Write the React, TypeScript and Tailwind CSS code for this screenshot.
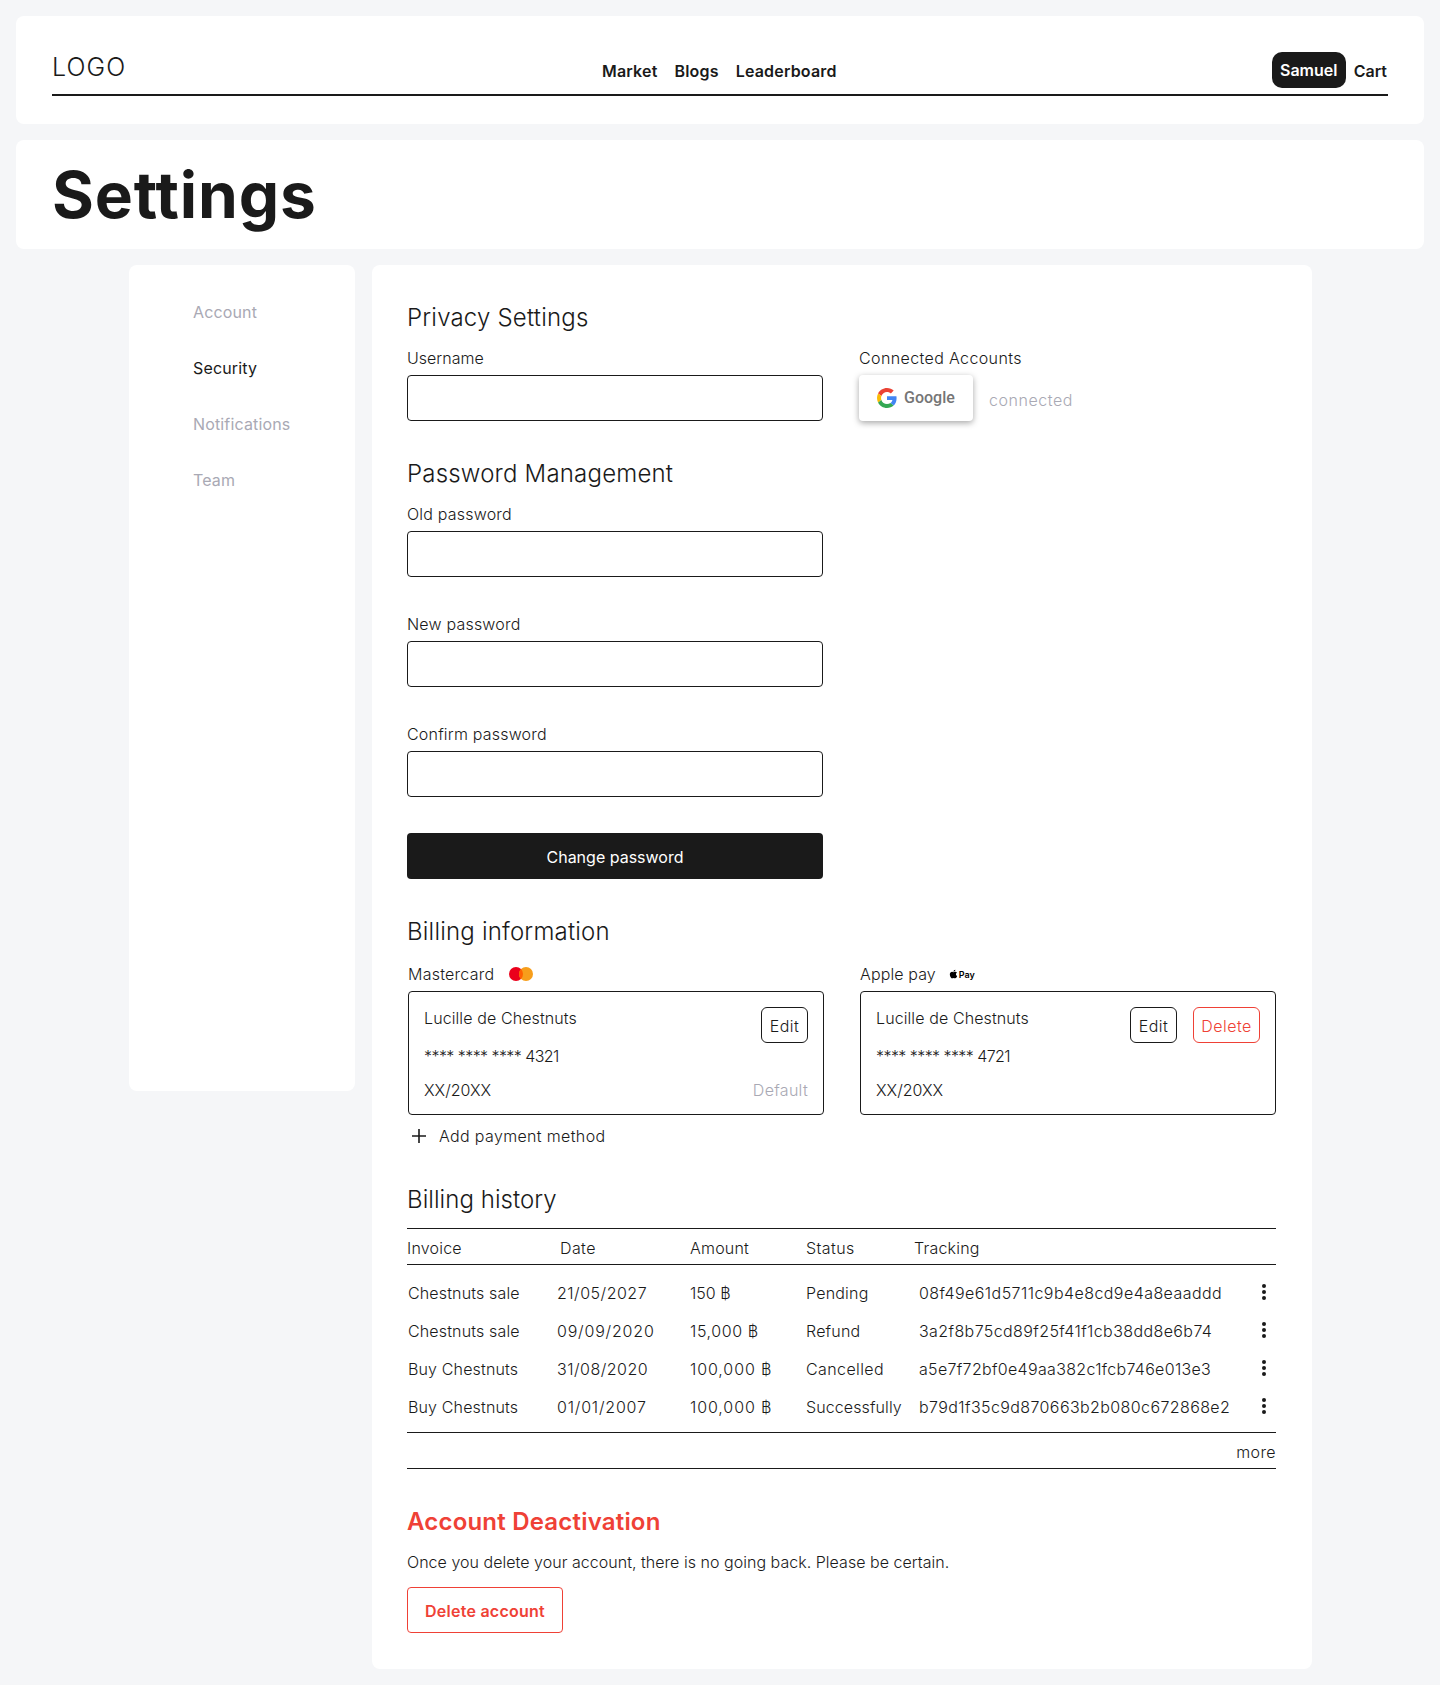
const Field = ({ label, top }: { label: string; top: string }) => (
  <div className={top}>
    <div className="h-6 leading-6 tracking-[0.2px]">{label}</div>
    <div className="mt-[5px] h-[46px] w-[416px] rounded border border-[#1a1a1a] bg-white" />
  </div>
);

const H = ({ children, top }: { children: string; top: string }) => (
  <h2 className={`${top} h-8 text-2xl leading-[34px] font-light tracking-[0.2px] text-[#1a1a1a]`}>{children}</h2>
);

const GoogleG = () => (
  <svg width="20" height="20" viewBox="0 0 48 48">
    <path fill="#EA4335" d="M24 9.5c3.54 0 6.71 1.22 9.21 3.6l6.85-6.85C35.9 2.38 30.47 0 24 0 14.62 0 6.51 5.38 2.56 13.22l7.98 6.19C12.43 13.72 17.74 9.5 24 9.5z" />
    <path fill="#4285F4" d="M46.98 24.55c0-1.57-.15-3.09-.38-4.55H24v9.02h12.94c-.58 2.96-2.26 5.48-4.78 7.18l7.73 6c4.51-4.18 7.09-10.36 7.09-17.65z" />
    <path fill="#FBBC05" d="M10.53 28.59c-.48-1.45-.76-2.99-.76-4.59s.27-3.14.76-4.59l-7.98-6.19C.92 16.46 0 20.12 0 24c0 3.88.92 7.54 2.56 10.78l7.97-6.19z" />
    <path fill="#34A853" d="M24 48c6.48 0 11.93-2.13 15.89-5.81l-7.73-6c-2.15 1.45-4.92 2.3-8.16 2.3-6.26 0-11.57-4.22-13.47-9.91l-7.98 6.19C6.51 42.62 14.62 48 24 48z" />
  </svg>
);

const Mastercard = () => (
  <svg width="24" height="14" viewBox="0 0 24 14" className="block">
    <circle cx="7" cy="7" r="7" fill="#eb001b" />
    <circle cx="17" cy="7" r="7" fill="#f79e1b" />
    <path d="M12 2.1a7 7 0 0 1 0 9.8a7 7 0 0 1 0-9.8z" fill="#ff5f00" />
  </svg>
);

const ApplePay = () => (
  <span className="flex items-center gap-px text-black">
    <svg width="9" height="10" viewBox="0 0 384 512" fill="currentColor">
      <path d="M318.7 268.7c-.2-36.7 16.4-64.4 50-84.8-18.8-26.9-47.2-41.7-84.7-44.6-35.5-2.8-74.3 20.7-88.5 20.7-15 0-49.4-19.7-76.4-19.7C63.3 141.2 4 184.8 4 273.5q0 39.3 14.4 81.2c12.8 36.7 59 126.7 107.2 125.2 25.2-.6 43-17.9 75.8-17.9 31.8 0 48.3 17.9 76.4 17.9 48.6-.7 90.4-82.5 102.6-119.3-65.2-30.7-61.7-90-61.7-91.9zm-56.6-164.2c27.3-32.4 24.8-61.9 24-72.5-24.1 1.4-52 16.4-67.9 34.9-17.5 19.8-27.8 44.3-25.6 71.9 26.1 2 49.9-11.4 69.5-34.3z" />
    </svg>
    <span className="text-[9px] leading-none font-semibold font-['Inter',sans-serif]">Pay</span>
  </span>
);

const Dots = () => (
  <svg width="6" height="18" viewBox="0 0 6 18" className="block">
    <circle cx="3" cy="3" r="2" fill="#1a1a1a" />
    <circle cx="3" cy="9" r="2" fill="#1a1a1a" />
    <circle cx="3" cy="15" r="2" fill="#1a1a1a" />
  </svg>
);

const rows = [
  [["Chestnuts sale", "tracking-[0.15px]"], ["21/05/2027", "tracking-[0.5px]"], ["150 ฿", "tracking-[0px]"], ["Pending", "tracking-[0.2px]"], ["08f49e61d5711c9b4e8cd9e4a8eaaddd", "tracking-[0.44px]"]],
  [["Chestnuts sale", "tracking-[0.15px]"], ["09/09/2020", "tracking-[0.8px]"], ["15,000 ฿", "tracking-[0.6px]"], ["Refund", "tracking-[0.2px]"], ["3a2f8b75cd89f25f41f1cb38dd8e6b74", "tracking-[0.4px]"]],
  [["Buy Chestnuts", "tracking-[0.15px]"], ["31/08/2020", "tracking-[0.5px]"], ["100,000 ฿", "tracking-[0.9px]"], ["Cancelled", "tracking-[0.4px]"], ["a5e7f72bf0e49aa382c1fcb746e013e3", "tracking-[0.32px]"]],
  [["Buy Chestnuts", "tracking-[0.15px]"], ["01/01/2007", "tracking-[0.8px]"], ["100,000 ฿", "tracking-[0.9px]"], ["Successfully", "tracking-[0.1px]"], ["b79d1f35c9d870663b2b080c672868e2", "tracking-[0.4px]"]],
];

const CardBox = ({ num, children }: { num: string; children: React.ReactNode }) => (
  <div className="relative mt-[5px] h-[124px] w-[416px] rounded border border-[#1a1a1a] px-[15px]">
    <div className="pt-[14px] leading-6 tracking-[0.1px]">Lucille de Chestnuts</div>
    <div className="mt-[14px] leading-6 tracking-[-0.56px]">{num}</div>
    <div className="mt-[10px] leading-6">XX/20XX</div>
    {children}
  </div>
);

export default function App() {
  return (
    <div className="min-h-[1685px] bg-[#f5f6f8] p-4 font-['Inter',sans-serif] text-base text-[#1a1a1a]">
      <header className="h-[108px] rounded-lg bg-white px-9 pt-9">
        <div className="relative flex h-[44px] items-start justify-between border-b-2 border-[#1a1a1a]">
          <div className="pt-px text-[25px] leading-[28px] font-light tracking-[1.1px]">LOGO</div>
          <nav className="absolute left-[550px] top-[7px] flex gap-[17px] font-semibold leading-6 tracking-[0.18px]">
            <span>Market</span>
            <span>Blogs</span>
            <span>Leaderboard</span>
          </nav>
          <div className="flex items-start gap-2 font-semibold">
            <span className="flex h-9 w-[74px] items-center justify-center rounded-[10px] bg-[#1a1a1a] text-white">Samuel</span>
            <span className="pt-[7px] pr-px leading-6">Cart</span>
          </div>
        </div>
      </header>

      <section className="mt-4 h-[109px] rounded-lg bg-white px-9">
        <h1 className="pt-4 text-[64px] leading-[78px] font-bold tracking-[0.8px]">Settings</h1>
      </section>

      <div className="mt-4 flex items-start gap-[17px] pl-[113px]">
        <aside className="h-[826px] w-[226px] rounded-lg bg-white pl-16 pt-[35px] text-[#a9a9b4]">
          <div className="flex flex-col gap-8 leading-6 tracking-[0.15px]">
            <span>Account</span>
            <span className="text-[#1a1a1a]">Security</span>
            <span>Notifications</span>
            <span>Team</span>
          </div>
        </aside>

        <main className="w-[940px] rounded-lg bg-white pl-[35px] pr-9 pt-9 pb-9 font-light">
          <H top="">Privacy Settings</H>
          <div className="mt-[13px] flex gap-9">
            <div>
              <div className="h-6 leading-6">Username</div>
              <div className="mt-[5px] h-[46px] w-[416px] rounded border border-[#1a1a1a]" />
            </div>
            <div>
              <div className="h-6 leading-6 tracking-[0.38px]">Connected Accounts</div>
              <div className="mt-[5px] flex items-start gap-4">
                <div className="flex h-[46px] w-[114px] items-center gap-[7px] rounded bg-white pl-[18px] font-['Roboto',sans-serif] font-medium text-[#757575] shadow-[0_2px_6px_rgba(0,0,0,0.35)]">
                  <GoogleG />
                  <span>Google</span>
                </div>
                <span className="pt-[13px] leading-6 tracking-[0.55px] text-[#a9a9b4]">connected</span>
              </div>
            </div>
          </div>

          <H top="mt-9">Password Management</H>
          <Field label="Old password" top="mt-[13px]" />
          <Field label="New password" top="mt-[35px]" />
          <Field label="Confirm password" top="mt-[35px]" />
          <button className="mt-9 block h-[46px] w-[416px] rounded bg-[#1a1a1a] pt-[2px] text-white font-normal">Change password</button>

          <H top="mt-9">Billing information</H>
          <div className="mt-[15px] flex gap-9 pl-px">
            <div>
              <div className="flex h-6 items-center gap-[15px] leading-6">
                <span className="tracking-[0.25px]">Mastercard</span>
                <Mastercard />
              </div>
              <CardBox num="**** **** **** 4321">
                <span className="absolute right-[15px] top-[15px] flex h-9 w-[47px] items-center justify-center rounded-md border border-[#1a1a1a] pt-[2px] tracking-[0.4px]">Edit</span>
                <span className="absolute bottom-3 right-[15px] leading-6 tracking-[0.3px] text-[#a9a9b4]">Default</span>
              </CardBox>
            </div>
            <div>
              <div className="flex h-6 items-center gap-[13px] leading-6">
                <span className="tracking-[0.12px]">Apple pay</span>
                <ApplePay />
              </div>
              <CardBox num="**** **** **** 4721">
                <span className="absolute right-[15px] top-[15px] flex gap-4">
                  <span className="flex h-9 w-[47px] items-center justify-center rounded-md border border-[#1a1a1a] pt-[2px] tracking-[0.4px]">Edit</span>
                  <span className="flex h-9 w-[67px] items-center justify-center rounded-md border border-[#ef4136] pt-[2px] tracking-[0.5px] text-[#ef4136]">Delete</span>
                </span>
              </CardBox>
            </div>
          </div>
          <div className="mt-[9px] flex h-6 items-center gap-[12px] pl-[4px] leading-6">
            <svg width="16" height="16" viewBox="0 0 16 16" className="block">
              <path d="M8 1v14M1 8h14" stroke="#1a1a1a" strokeWidth="1.6" fill="none" />
            </svg>
            <span className="tracking-[0.35px]">Add payment method</span>
          </div>

          <h2 className="mt-[35px] h-8 text-2xl leading-[34px] font-light tracking-[0.05px]">Billing history</h2>
          <div className="mt-[13px] border-y border-[#1a1a1a]">
            <div className="grid h-[35px] grid-cols-[153px_130px_116px_108px_1fr] items-center pt-[2px] tracking-[0.2px]">
              <span>Invoice</span>
              <span className="tracking-[0.4px]">Date</span>
              <span>Amount</span>
              <span className="tracking-[0.4px]">Status</span>
              <span>Tracking</span>
            </div>
          </div>
          <div className="border-b border-[#1a1a1a] pt-[9px] pb-[6px]">
            {rows.map((r) => (
              <div key={r[4][0]} className="grid h-[38px] grid-cols-[149px_133px_116px_113px_1fr_6px] items-center pl-px pr-[9px] whitespace-nowrap">
                {r.map((c) => (
                  <span key={c[0]} className={c[1]}>{c[0]}</span>
                ))}
                <span className="-mt-[2px]"><Dots /></span>
              </div>
            ))}
          </div>
          <div className="flex h-[36px] items-center justify-end border-b border-[#1a1a1a] pt-[2px] tracking-[0.4px]">more</div>

          <h2 className="mt-[37px] h-8 text-2xl leading-8 font-semibold tracking-[0.2px] text-[#ef4136]">Account Deactivation</h2>
          <p className="mt-3 leading-6 tracking-[0.03px]">Once you delete your account, there is no going back. Please be certain.</p>
          <button className="mt-[13px] block h-[46px] w-[156px] rounded border border-[#ef4136] pt-[2px] font-semibold tracking-[0.25px] text-[#ef4136]">Delete account</button>
        </main>
      </div>
    </div>
  );
}
